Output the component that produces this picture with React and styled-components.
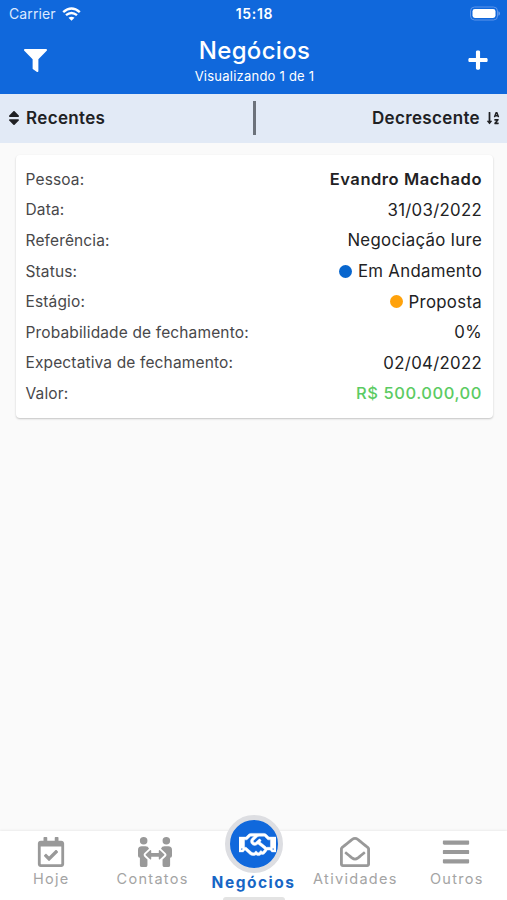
import React from "react";
import styled, { createGlobalStyle } from "styled-components";
import {
  FaBars,
  FaFilter,
  FaPeopleArrows,
  FaPlus,
  FaRegCalendarCheck,
  FaRegEnvelopeOpen,
  FaRegHandshake,
  FaSort,
  FaSortAlphaDown,
} from "react-icons/fa";

const GlobalStyle = createGlobalStyle`
  :root {
    --primary: #1068dc;
    --text: #202124;
    --muted: #999999;
  }
  * {
    box-sizing: border-box;
  }
  body {
    margin: 0;
    font-family: Inter, "Liberation Sans", sans-serif;
    color: var(--text);
  }
  svg {
    display: block;
    flex-shrink: 0;
  }
`;

const Screen = styled.div`
  height: 900px;
  display: flex;
  flex-direction: column;
  overflow: hidden;
  background-color: #fafafa;
`;
const Top = styled.div`
  height: 94px;
  background-color: var(--primary);
  color: #fff;
`;
const StatusBar = styled.div`
  height: 27px;
  padding: 0 7px 0 9px;
  display: grid;
  grid-template-columns: 1fr auto 1fr;
  align-items: center;
`;
const Carrier = styled.div`
  display: flex;
  align-items: center;
  gap: 6px;
  font-size: 14px;
  line-height: 27px;
  letter-spacing: 0.1px;
  color: #dce9ff;
`;
const Clock = styled.div`
  font-size: 14px;
  font-weight: 600;
  letter-spacing: 0.7px;
`;
const Battery = styled.svg`
  justify-self: end;
`;
const Header = styled.header`
  height: 66px;
  padding: 0 18px 0 24px;
  display: grid;
  grid-template-columns: 23px 1fr 22px;
  align-items: center;
`;
const Heading = styled.div`
  text-align: center;
  padding: 7px 5px 0 0;
`;
const Title = styled.h1`
  margin: 0;
  font-size: 24px;
  line-height: 28px;
  font-weight: 500;
  letter-spacing: 0.3px;
`;
const Subtitle = styled.p`
  margin: 2px 0 6px;
  font-size: 13px;
  line-height: 18px;
  letter-spacing: 0.23px;
`;
const SortBar = styled.div`
  height: 49px;
  padding: 0 7px 0 8px;
  display: grid;
  grid-template-columns: 1fr 3px 1fr;
  align-items: center;
  background-color: #e2eaf6;
`;
const SortOption = styled.div`
  display: flex;
  align-items: center;
  justify-content: ${(props) => (props.$end ? "flex-end" : "flex-start")};
  gap: 6px;
  padding-bottom: 2px;
  font-size: 17px;
  font-weight: 600;
  letter-spacing: 0.35px;
`;
const SortIcon = styled(FaSort)`
  width: 12px;
  height: 18px;
`;
const Divider = styled.div`
  height: 34px;
  margin-bottom: 1px;
  background-color: #6c727b;
`;
const Content = styled.main`
  flex: 1;
  padding: 12px 14px 0 16px;
`;
const Card = styled.section`
  height: 263px;
  padding: 9px 11px 0 9px;
  border-radius: 4px;
  background-color: #fff;
  box-shadow: 0 1px 2px rgba(0, 0, 0, 0.22);
`;
const Row = styled.div`
  height: 30.6px;
  display: flex;
  align-items: center;
  justify-content: space-between;
`;
const Label = styled.span`
  padding-left: 0.5px;
  font-size: 15.5px;
  letter-spacing: 0.14px;
  color: #48484a;
`;
const Value = styled.span`
  display: flex;
  align-items: center;
  gap: 6px;
  font-size: ${(props) => (props.$bold || props.$color ? 16.5 : 16.8)}px;
  font-weight: ${(props) => (props.$bold ? 600 : props.$color ? 500 : 400)};
  letter-spacing: ${(props) => (props.$bold || props.$color ? 0.55 : 0.3)}px;
  color: ${(props) => props.$color || "#222224"};
`;
const Dot = styled.span`
  width: 13px;
  height: 13px;
  border-radius: 50%;
  background-color: ${(props) => props.$color};
`;
const TabBar = styled.nav`
  height: 69px;
  display: flex;
  background-color: #fff;
  box-shadow: 0 -1px 2px rgba(0, 0, 0, 0.06);
`;
const Tab = styled.div`
  flex: 1 1 0;
  min-width: 0;
  display: flex;
  flex-direction: column;
  align-items: center;
`;
const TabIcon = styled.div`
  height: 39px;
  padding: 3px 0 0 ${(props) => props.$shift || 0}px;
  display: flex;
  align-items: center;
  color: var(--muted);
`;
const TabLabel = styled.span`
  padding-left: ${(props) => (props.$active ? 0 : 1)}px;
  font-size: ${(props) => (props.$active ? 15.5 : 14.5)}px;
  line-height: ${(props) => (props.$active ? 20 : 18)}px;
  font-weight: ${(props) => (props.$active ? 700 : 400)};
  letter-spacing: ${(props) => (props.$active ? 1.5 : 1.3)}px;
  white-space: nowrap;
  color: ${(props) => (props.$active ? "#1766c5" : "#a4a4a4")};
`;
const ActiveCircle = styled.div`
  width: 58px;
  height: 58px;
  margin: -16px 0 0;
  padding-left: 7px;
  border: 5px solid #dddee2;
  border-radius: 50%;
  display: flex;
  align-items: center;
  justify-content: center;
  background-color: var(--primary);
  color: #fff;
`;
const HandshakeIcon = styled(FaRegHandshake)`
  stroke: currentColor;
  stroke-width: 8px;
`;
const HomeIndicator = styled.div`
  width: 62px;
  height: 3px;
  margin-top: auto;
  border-radius: 3px 3px 0 0;
  background-color: #e3e3e3;
`;

const rows = [
  { label: "Pessoa:", value: "Evandro Machado", bold: true },
  { label: "Data:", value: "31/03/2022" },
  { label: "Referência:", value: "Negociação Iure" },
  { label: "Status:", value: "Em Andamento", dot: "#0866ce" },
  { label: "Estágio:", value: "Proposta", dot: "#ffa20b" },
  { label: "Probabilidade de fechamento:", value: "0%" },
  { label: "Expectativa de fechamento:", value: "02/04/2022" },
  { label: "Valor:", value: "R$ 500.000,00", color: "#5bcb62" },
];

const tabs = [
  { name: "Hoje", icon: <FaRegCalendarCheck size={30} />, shift: 1 },
  { name: "Contatos", icon: <FaPeopleArrows size={34} />, shift: 5 },
  { name: "Negócios", icon: <HandshakeIcon size={37} />, active: true },
  { name: "Atividades", icon: <FaRegEnvelopeOpen size={30} /> },
  { name: "Outros", icon: <FaBars size={30} /> },
];

const WifiIcon = () => (
  <svg width="19" height="14" viewBox="0 0 19 14" fill="none">
    <path d="M1.2 5.1Q9.5-2 17.8 5.1" stroke="#fff" strokeWidth="2.5" />
    <path d="M4 8.2Q9.5 3.6 15 8.2" stroke="#fff" strokeWidth="2.4" />
    <path d="M6.5 10.8Q9.5 8.5 12.5 10.8L9.5 13.7Z" fill="#fff" />
  </svg>
);

const BatteryIcon = () => (
  <Battery width="30" height="15" viewBox="0 0 30 15">
    <rect x="0.5" y="1" width="27" height="13" rx="4" fill="none" stroke="#5c94ea" />
    <rect x="2.5" y="3" width="23" height="9" rx="2.4" fill="#fff" />
    <path d="M28.5 5.2v4.6q1.3-.6 1.3-2.3t-1.3-2.3" fill="#7caaf0" />
  </Battery>
);

const App = () => {
  return (
    <>
      <GlobalStyle />
      <Screen>
        <Top>
          <StatusBar>
            <Carrier>
              Carrier
              <WifiIcon />
            </Carrier>
            <Clock>15:18</Clock>
            <BatteryIcon />
          </StatusBar>
          <Header>
            <FaFilter size={23} />
            <Heading>
              <Title>Negócios</Title>
              <Subtitle>Visualizando 1 de 1</Subtitle>
            </Heading>
            <FaPlus size={22} />
          </Header>
        </Top>
        <SortBar>
          <SortOption>
            <SortIcon />
            Recentes
          </SortOption>
          <Divider />
          <SortOption $end>
            Decrescente
            <FaSortAlphaDown size={14} />
          </SortOption>
        </SortBar>
        <Content>
          <Card>
            {rows.map((row) => (
              <Row key={row.label}>
                <Label>{row.label}</Label>
                <Value $bold={row.bold} $color={row.color}>
                  {row.dot && <Dot $color={row.dot} />}
                  {row.value}
                </Value>
              </Row>
            ))}
          </Card>
        </Content>
        <TabBar>
          {tabs.map((tab) => (
            <Tab key={tab.name}>
              {tab.active ? (
                <ActiveCircle>{tab.icon}</ActiveCircle>
              ) : (
                <TabIcon $shift={tab.shift}>{tab.icon}</TabIcon>
              )}
              <TabLabel $active={tab.active}>{tab.name}</TabLabel>
              {tab.active && <HomeIndicator />}
            </Tab>
          ))}
        </TabBar>
      </Screen>
    </>
  );
};

export default App;
